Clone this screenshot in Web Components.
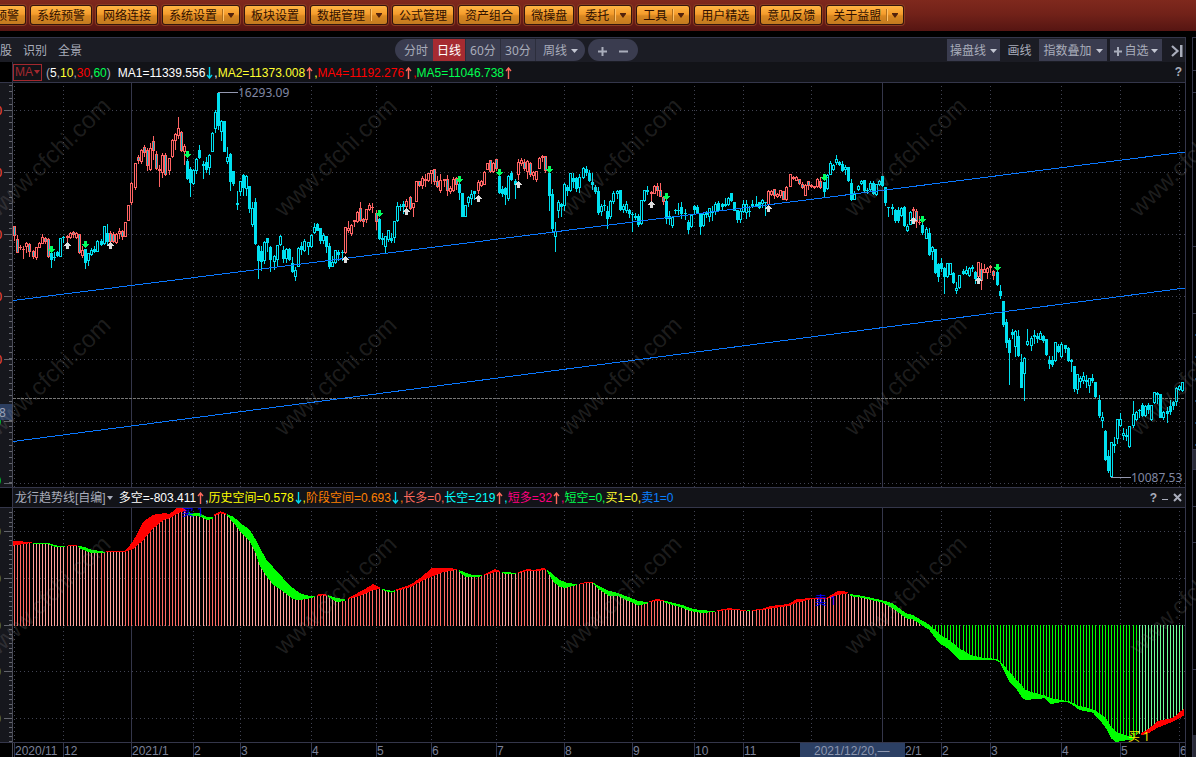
<!DOCTYPE html>
<html lang="zh-CN">
<head>
<meta charset="utf-8">
<title>行情图</title>
<style>
  html, body { margin: 0; background: #000; }
  body { font: 12px/16px "Liberation Sans", "Noto Sans CJK SC", sans-serif; color: #a9adbb; min-height: 100vh; overflow: hidden; }
</style>
</head>
<body>
<trading-page></trading-page>

<script>
const define = (name, html, setup) => {
  const tpl = document.createElement('template');
  tpl.innerHTML = html;
  customElements.define(name, class extends HTMLElement {
    connectedCallback() {
      if (this.shadowRoot) return;
      this.attachShadow({ mode: 'open' }).append(tpl.content.cloneNode(true));
      if (setup) setup(this, this.shadowRoot);
    }
  });
};

/* Orange menu button; the "menu" attribute adds a divider and an arrow */
define('menu-button', `
<style>
  :host { display: block; flex: none; }
  button { display: flex; align-items: center; height: 20px; padding: 0 6px; margin: 0; border: 1px solid #32150c; border-radius: 3px;
    background: linear-gradient(#ffb544 0, #f59c2c 45%, #d98720 55%, #c27a20 100%); box-shadow: 0 0 0 1px #8a3a22;
    font: 12px/18px "Noto Sans CJK SC", sans-serif; color: #301000; white-space: nowrap; }
  i { display: none; }
  :host([menu]) i { display: block; width: 0; height: 12px; margin-left: 5px; border-left: 1px solid #b06e1c; border-right: 1px solid #ffc166; }
  :host([menu]) svg { display: block; margin-left: 4px; }
  :host([menu]) button { padding-right: 5px; }
  svg { display: none; }
</style>
<button type="button"><slot></slot><i></i><svg width="6" height="5" viewBox="0 0 6 5"><path d="M0 0h6v1L3 5 0 1z" fill="#52220c"/></svg></button>`);

define('menu-bar', `
<style>
  :host { display: block; height: 31px; background: linear-gradient(#7f291d, #722219 45%, #561512); overflow: hidden; }
  nav { display: flex; gap: 4px; padding-top: 5px; }
  menu-button:first-child { margin-left: -12px; }
</style>
<nav aria-label="主菜单">
  <menu-button>预警</menu-button><menu-button>系统预警</menu-button><menu-button>网络连接</menu-button>
  <menu-button menu>系统设置</menu-button><menu-button>板块设置</menu-button><menu-button menu>数据管理</menu-button>
  <menu-button>公式管理</menu-button><menu-button>资产组合</menu-button><menu-button>微操盘</menu-button>
  <menu-button menu>委托</menu-button><menu-button menu>工具</menu-button><menu-button>用户精选</menu-button>
  <menu-button>意见反馈</menu-button><menu-button menu>关于益盟</menu-button>
</nav>`);

define('chart-toolbar', `
<style>
  :host { display: flex; height: 24px; background: #1b1c24; overflow: hidden; }
  button { height: 22px; margin: 0; padding: 2px 0 0; border: 0; background: none; color: #a9adbb; white-space: nowrap;
    font: 12px/20px "Noto Sans", "Noto Sans CJK SC", sans-serif; display: flex; align-items: center; justify-content: center; gap: 4px; }
  .left { flex: 0 0 33.333%; display: flex; gap: 11px; padding-top: 1px; box-sizing: border-box; }
  .pill { display: flex; height: 22px; margin-top: 1px; background: #3a3c4f; border-radius: 11px; overflow: hidden; }
  .pill button + button { border-left: 1px solid #2c2e3c; }
  .periods button { width: 35px; }
  .periods button:first-child { width: 38px; padding-left: 4px; }
  .periods button:nth-child(2) { width: 32px; border: 0; background: #a62b31; color: #fff; }
  .periods button:last-child { width: 50px; }
  .zoom { margin-left: 3px; padding: 0 4px; }
  .zoom button { width: 21px; }
  .zoom button + button { border: 0; }
  .right { margin-left: auto; display: flex; gap: 3px; padding: 1px 1px 0 0; }
  .right .b { background: #3a3c4f; }
  .w1 { width: 53px; } .w2 { width: 33px; } .w3 { width: 68px; } .w4 { width: 52px; gap: 2px; } .w5 { width: 15px; margin-left: 4px; }
  svg { flex: none; }
</style>
<div class="left"><button>股</button><button>识别</button><button>全景</button></div>
<div class="pill periods"><button>分时</button><button>日线</button><button>60分</button><button>30分</button>
  <button>周线<svg width="7" height="4"><path d="M0 0h7L3.500 4z" fill="#c3c6d2"/></svg></button></div>
<div class="pill zoom"><button aria-label="放大"><svg width="9" height="9"><path d="M0 3.500h9v2H0zM3.500 0h2v9h-2z" fill="#a9adbb"/></svg></button>
  <button aria-label="缩小"><svg width="9" height="9"><path d="M0 3.500h9v2H0z" fill="#a9adbb"/></svg></button></div>
<div class="right">
  <button class="b w1">操盘线<svg width="7" height="4"><path d="M0 0h7L3.500 4z" fill="#c3c6d2"/></svg></button>
  <button class="w2">画线</button>
  <button class="b w3">指数叠加<svg width="7" height="4"><path d="M0 0h7L3.500 4z" fill="#c3c6d2"/></svg></button>
  <button class="b w4"><svg width="8" height="9"><path d="M0 3.500h8v2H0zM3 0h2v9H3z" fill="#a9adbb"/></svg>自选<svg width="7" height="4"><path d="M0 0h7L3.500 4z" fill="#c3c6d2"/></svg></button>
  <button class="w5" aria-label="收起"><svg width="12" height="12"><path d="M1 1l5.500 5L1 11" fill="none" stroke="#a9adbb" stroke-width="2.200"/><path d="M9 0h2.500v12H9z" fill="#a9adbb"/></svg></button>
</div>`);

/* A small up or down arrow set in a line of figures */
define('trend-arrow', `
<style>
  :host { display: inline-block; width: 7px; height: 12px; margin: 0 1px; vertical-align: -2px; }
  svg { display: block; fill: none; stroke: #ff6a5c; stroke-width: 1.400; }
  .down { display: none; }
  :host([down]) .down { display: block; stroke: #00d8f0; }
  :host([down]) .up { display: none; }
</style>
<svg class="up" width="7" height="12"><path d="M3.500 12V1M1 4l2.500-3L6 4"/></svg>
<svg class="down" width="7" height="12"><path d="M3.500 0v11M1 8l2.500 3L6 8"/></svg>`);

/* Strip above a chart: title, figures, and tools at the right */
define('chart-legend', `
<style>
  :host { display: flex; align-items: center; height: 20px; margin-left: 12px; padding: 0 2px 0 0; background: #121318;
    border-left: 1px solid #34364a; white-space: nowrap; color: #a9adbb; }
  .tools { margin-left: auto; display: flex; gap: 5px; align-items: center; padding-right: 1px; }
</style>
<slot></slot><div class="tools"><slot name="tools"></slot></div>`);

/* Groups of [x offset, y offset, "x high bodyTop bodyBottom low kind"], in thirds of a unit */
const CANDLES = [
[0,80,`44 440 440 467 480 m,52 467 479 517 517 m,61 495 501 501 509 r,70 499 508 508 534 r,79 488 491 499 518 r,88 490 492 513 530 m,99 510 514 529 535 m,109 503 503 533 539 r,118 488 490 502 502 r,127 462 472 489 489 r,136 472 476 485 489 m,145 476 478 529 531 m,154 500 519 538 563 c,163 516 531 531 541 c,171 514 517 525 530 c,181 474 474 529 529 o,191 468 472 472 488 c,202 465 470 473 483 m,211 457 461 471 475 r,220 455 458 463 473 m,229 457 460 471 474 r,238 462 462 517 519 m,247 500 512 526 533 r,256 507 507 547 566 c,265 519 519 541 555 o,274 506 510 522 526 o,283 499 508 513 517 c,292 482 484 514 514 o,303 477 484 493 495 c,313 438 438 491 494 o,322 432 461 485 492 c,331 455 459 483 487 m,341 456 462 485 487 m,349 459 462 487 489 r,358 444 453 460 474 r,367 450 455 468 477 m,376 426 427 469 470 r,385 376 376 421 421 r,394 306 310 368 372 r,406 250 250 323 329 r,416 226 232 240 249 m,425 208 211 244 249 r,433 195 202 217 229 m,442 204 211 257 272 m,452 190 204 269 272 r,460 169 185 210 237 m,469 213 223 266 269 m,478 256 269 271 318 r,487 220 226 278 292 r,496 219 226 284 286 m,508 234 235 272 284 r,518 178 180 230 232 r,526 159 163 180 207 r,535 111 146 167 176 r,544 155 157 211 214 m,553 194 199 215 254 r,562 237 243 294 297 c,571 262 268 308 348 c,580 268 270 309 314 o,589 235 238 271 279 o,598 197 210 232 235 c,610 245 252 256 294 c,619 231 247 267 277 c,628 222 225 263 284 o,637 158 160 214 214 o,646 91 97 145 158 o,655 38 40 135 147 c,664 122 124 155 182 o,673 123 124 214 215 c,682 202 231 245 249 o,691 219 222 304 330 c,700 275 275 310 315 c,712 333 370 374 387 c,721 303 305 335 347 o,730 283 287 322 347 c,739 287 290 325 347 o,748 318 320 386 396 c,757 366 386 433 440 o,766 354 366 491 492 c,775 495 499 540 594 c,784 498 515 543 572 c,793 484 487 541 550 o,802 474 474 486 515 c,811 498 501 538 575 c,823 527 530 544 567 o,832 496 497 538 558 o,841 465 470 492 495 o,850 498 511 536 546 c,859 505 507 536 547 o,868 506 507 539 540 c,877 532 549 575 577 c,886 561 571 589 602 o,895 501 505 558 560 o`],
[300,80,`4 486 499 508 522 c,13 477 484 512 514 o,25 486 487 500 522 o,34 463 466 500 501 o,43 431 441 457 461 o,52 430 432 450 452 c,61 444 446 481 490 c,70 459 467 482 490 o,79 468 470 500 516 c,88 490 499 560 564 c,97 528 548 559 560 o,106 510 511 547 550 o,115 512 516 523 541 c,127 511 517 517 542 c,136 441 442 518 521 r,145 425 446 452 456 r,154 432 437 461 465 r,163 420 422 423 440 r,172 393 397 424 426 r,181 366 386 422 423 m,190 414 417 424 440 m,199 387 388 419 426 r,208 371 376 388 391 r,217 369 381 383 398 r,229 391 400 425 447 m,238 414 417 475 477 c,247 460 475 478 494 c,256 468 470 500 519 o,265 450 451 479 485 o,274 460 476 480 486 c,283 423 425 472 486 o,292 367 380 421 423 o,301 373 378 380 390 c,310 365 374 379 400 c,319 358 365 379 382 r,331 349 353 386 388 m,340 371 371 381 408 r,349 303 304 363 365 r,358 303 305 316 320 m,367 289 295 316 326 r,376 284 297 300 318 m,385 279 280 300 304 r,394 270 271 280 309 r,403 267 268 303 313 m,412 290 303 320 323 m,421 283 301 332 338 r,433 298 299 301 318 r,442 285 299 330 346 m,451 320 325 335 341 r,460 291 298 331 333 r,469 292 294 314 328 m,478 311 313 338 357 c,487 341 341 409 410 c,496 375 377 409 410 o,505 348 353 367 378 o,514 331 344 355 374 o,523 333 335 340 357 c,535 300 306 332 341 r,544 301 303 315 320 r,553 274 276 313 314 r,562 249 250 268 268 r,571 240 241 275 278 m,580 247 250 275 278 r,589 237 238 265 272 m,598 287 290 337 341 c,607 318 328 341 350 c,616 322 324 344 372 c,625 286 289 354 360 o,634 273 279 298 301 c,646 299 305 313 354 c,655 237 248 283 298 r,664 234 240 250 256 r,673 237 248 264 270 m,682 241 243 275 294 r,691 248 250 283 288 m,700 274 276 287 298 r,709 273 275 298 304 r,718 231 235 265 266 r,727 225 229 231 243 r,736 228 229 270 278 m,748 276 280 346 392 c,757 328 343 445 454 c,766 427 455 470 513 o,775 362 368 391 411 o,784 371 374 379 408 c,793 311 313 376 390 o,802 316 323 331 345 c,811 279 280 331 333 o,820 280 294 304 322 c,829 292 295 324 333 c,838 282 292 323 336 o,850 262 265 292 296 o,859 260 267 276 287 c,868 272 281 300 303 c,877 279 308 312 327 c,886 315 321 333 341 c,895 322 333 398 404 c`],
[600,80,`4 372 378 393 407 o,13 360 375 377 392 c,22 380 393 415 444 c,31 360 363 410 416 o,40 333 340 365 369 o,52 332 335 341 356 o,61 330 331 389 391 c,70 372 380 387 398 o,79 363 372 390 397 o,88 388 390 400 413 c,97 398 402 402 453 c,106 399 408 412 419 c,115 403 408 432 440 c,124 360 362 430 432 o,133 331 332 361 363 o,142 318 330 334 343 c,154 334 336 341 360 r,163 315 319 340 341 r,172 309 319 332 345 m,181 310 331 348 350 m,190 349 352 364 374 m,199 362 364 415 430 c,208 395 408 415 433 o,217 409 413 436 441 o,226 387 391 392 399 c,235 369 391 392 403 c,244 366 381 400 414 c,256 387 400 400 417 c,265 420 427 449 459 c,274 403 406 438 441 o,283 375 378 387 400 c,292 376 382 396 398 c,301 400 402 440 462 c,310 401 404 436 440 o,319 394 398 403 413 c,328 385 386 410 424 o,337 380 396 398 422 c,346 368 372 395 402 o,355 363 371 391 395 c,367 370 374 378 391 c,376 356 373 376 378 c,385 351 354 374 375 o,394 339 341 362 364 c,403 366 367 391 392 c,412 390 391 418 426 c,421 389 393 419 426 o,430 360 373 395 398 o,439 362 373 398 416 o,448 380 393 394 408 c,457 360 374 377 383 o,469 348 372 378 380 c,478 367 367 381 386 c,487 358 362 369 383 o,496 367 367 367 405 c,505 332 335 374 377 r,514 331 333 344 346 r,523 327 328 347 354 m,532 339 343 350 352 r,541 331 332 345 352 r,550 333 335 357 359 m,559 320 323 357 360 r,571 282 284 318 320 r,580 288 291 296 299 m,589 289 293 300 301 r,598 297 299 310 312 m,607 307 312 321 324 m,616 314 317 346 347 r,625 303 305 317 328 m,634 312 316 318 322 r,643 318 320 322 324 r,652 296 299 318 321 r,661 291 304 322 324 m,673 306 306 334 352 c,682 283 285 325 327 o,691 243 250 283 284 o,700 252 256 267 270 o,709 225 238 247 253 o,718 243 247 253 256 c,727 243 254 270 273 c,736 255 262 269 283 o,745 262 262 301 303 c,754 297 310 357 361 c,763 333 342 357 359 o,775 316 318 328 330 o,784 301 303 311 314 o,793 300 302 332 333 c,802 326 330 331 341 c,811 304 310 329 333 o,820 305 311 340 342 c,829 312 314 342 345 o,838 302 304 312 317 o,847 288 290 316 320 c,856 321 322 366 375 c,865 381 382 383 408 c,877 373 382 384 404 c,886 387 390 420 426 c,895 383 390 420 426 c`],
[880,140,`64 203 206 226 230 o,73 200 203 256 260 c,82 254 258 272 275 o,91 215 217 253 254 o,100 201 209 212 231 r,109 208 213 244 261 m,118 228 246 248 254 r,127 251 255 277 284 c,139 261 269 294 296 o,148 266 279 343 346 c,157 318 322 335 359 o,166 327 328 397 399 c,175 370 373 410 425 c,184 354 370 386 393 c,193 382 384 408 459 c,202 369 371 410 413 o,211 370 371 402 403 o,220 396 401 427 430 c,229 428 445 450 459 o,238 405 406 443 445 o,250 388 395 399 404 c,259 380 390 401 404 o,268 382 386 407 410 o,277 377 382 384 393 c,286 395 397 415 429 c,295 367 368 410 413 r,304 369 387 421 449 m,313 373 388 396 398 r,322 383 385 397 416 r,331 375 380 382 396 r,340 392 394 406 418 m,352 394 397 433 435 c,361 435 454 467 474 c,370 483 484 552 558 c,379 538 547 608 622 c,388 596 602 636 732 c,397 567 576 584 595 c,406 571 573 619 648 o,415 572 588 646 648 c,424 642 666 742 743 c,433 652 656 700 780 o,442 567 604 613 615 o,454 590 594 616 630 o,463 570 586 588 611 c,472 581 590 595 606 c,481 575 580 597 598 o,490 587 590 600 606 c,499 597 599 643 645 c,508 648 661 670 686 c,517 648 660 672 680 c,526 606 607 660 663 o,535 614 620 634 636 c,544 606 612 650 653 o,556 615 617 626 636 c,565 621 624 662 664 c,574 657 660 663 693 c,583 679 680 746 753 c,592 702 703 748 759 o,601 708 715 724 741 o,610 698 710 722 729 o,619 707 720 724 742 c,628 714 715 736 756 o,637 702 714 722 728 c,646 726 728 770 773 c,658 766 781 827 831 c,667 816 833 841 861 o,676 870 873 958 960 c,685 930 950 992 996 c,694 906 908 1010 1013 o,703 893 912 917 936 c,712 837 839 895 911 o,721 819 837 856 859 o,730 864 881 886 897 o,739 869 885 890 901 c,748 858 860 919 923 o,760 783 823 857 861 o,769 815 816 838 840 o,778 808 810 812 831 c,787 789 795 827 830 c,796 795 798 827 830 o,805 790 795 809 820 c,814 796 797 838 840 o,824 756 758 786 790 o,832 756 759 762 790 c,841 762 763 831 833 c,850 815 817 831 838 o,862 803 814 820 846 c,871 782 800 815 822 c,880 783 786 796 807 c,889 743 745 785 796 o,898 735 740 748 750 o,907 727 728 751 753 o`]
].flatMap(([ox, oy, s]) => s.split(',').map(t => {
  const p = t.split(' ');
  const y = v => oy + Math.floor(v / 3);
  return { x: ox + Math.floor(p[0] / 3), hi: y(p[1]), top: y(p[2]), bot: y(p[3]), lo: y(p[4]), kind: p[5] };
}));

/* Ribbon of the trend indicator: x, upper edge, lower edge, in thirds of a unit; one run per colour */
const RIBBON = `r 40 182 197,60 184 194,95 186 189|g 100 189 191,140 189 191,150 190 195,165 196 200,195 199 201|r 203 196 199,230 196 199|g 233 197 201,250 200 210,275 209 220,300 213 220,313 215 217|r 318 214 217,372 214 217,380 208 214,400 182 207,430 125 180,460 104 145,490 100 120,510 101 115,530 84 102,550 82 94,556 90 98|g 565 97 106,600 100 110,620 110 120,637 110 117|r 643 103 108,660 94 100,678 99 104|g 682 103 108,700 110 128,725 132 160,750 150 185,765 175 215,780 205 260,800 240 290,820 262 315,850 295 335,880 325 358,900 340 360,930 348 355,943 348 351|r 950 344 348,970 342 346,980 344 348|g 985 346 352,1010 354 365,1035 358 364|r 1045 354 357,1080 335 348,1120 312 330,1140 322 327|g 1145 326 330,1175 333 338,1185 331 335|r 1187 328 332,1200 325 330,1235 312 320,1265 290 303,1295 265 290,1330 264 276,1370 266 270|g 1378 270 276,1395 278 290,1415 284 292,1445 286 289|r 1452 283 286,1485 267 277,1500 272 276|g 1506 275 280,1547 279 283|r 1553 277 280,1580 268 273,1605 269 273,1629 264 271,1637 266 270|g 1641 268 273,1660 285 305,1680 300 322,1700 308 323,1730 313 315|r 1741 310 313,1760 306 309,1778 307 310|g 1780 308 312,1800 320 330,1825 332 347,1850 338 347,1890 353 365,1915 363 377,1942 366 370|r 1946 364 367,1970 357 362,1991 360 363|g 1993 362 367,2050 376 385,2070 384 393,2100 390 398,2145 393 397|r 2150 391 394,2190 384 389,2205 388 391,2237 389 392|g 2240 389 392,2250 389 392|r 2255 389 392,2280 388 391,2310 378 386,2365 372 378,2390 357 368,2438 354 357,2478 354 357,2513 333 345,2543 335 340|g 2551 342 348,2588 348 354,2648 361 368,2678 370 385,2718 400 415,2738 405 418,2788 434 450,2818 462 490,2848 480 508,2878 505 540,2908 523 540,2938 532 539,2983 536 539,2998 541 546,3028 575 605,3048 598 625,3068 620 655,3078 630 660,3108 640 657,3133 646 655,3153 655 672,3188 661 665,3208 663 668,3238 678 690,3278 687 698,3298 700 718,3318 715 745,3333 740 775,3348 755 786,3373 765 782,3400 770 778|r 3423 760 767,3448 745 758,3473 723 743,3518 714 725,3550 687 708`
.split('|').map(run => ({
  color: run[0] === 'r' ? '#ff0000' : '#00ff00',
  pts: run.slice(2).split(',').map(t => t.split(' ').map(Number)).map(([x, a, b]) => [x / 3, 480 + a / 3, 480 + b / 3])
}));
const ALL = RIBBON.flatMap(r => r.pts);
const edge = (pts, x) => {
  if (x <= pts[0][0]) return [pts[0][1], pts[0][2]];
  for (let i = 1; i < pts.length; i++) if (x <= pts[i][0]) {
    const [p, q] = [pts[i - 1], pts[i]], k = (x - p[0]) / (q[0] - p[0]);
    return [p[1] + k * (q[1] - p[1]), p[2] + k * (q[2] - p[2])];
  }
  const l = pts[pts.length - 1];
  return [l[1], l[2]];
};

const MONTHS = [[14,'2020/11'],[63,'12'],[131,'2021/1',1],[193,'2'],[240,'3'],[311,'4'],[376,'5'],[431,'6'],[496,'7'],[564,'8'],[632,'9'],[694,'10'],[743,'11'],[811,''],[882,'',1],[941,'2'],[990,'3'],[1061,'4'],[1120,'5'],[1179,'6']];
const rect = (x, y, w, h, f) => `<rect x="${x}" y="${y}" width="${w}" height="${h}" fill="${f}"/>`;
const grid = (y0, y1, rows, step) => {
  let s = rect(0, y0, 12, y1 - y0, '#16171d') + rect(12, y0, 1, y1 - y0, '#4a4c58');
  for (const y of rows) s += `<path d="M16 ${y}.5H1185" stroke="#414352" stroke-dasharray="1 3"/>` + rect(4, y, 8, 1, '#62646c');
  for (let y = rows[0] - step * 10; y < y1; y += step) if (y > y0) s += rect(9, Math.round(y), 3, 1, '#62646c');
  for (const [x, , solid] of MONTHS) s += solid
    ? `<path d="M${x}.5 ${y0}V${y1}" stroke="#34364a"/>`
    : `<path d="M${x}.5 ${y0 + 3}V${y1}" stroke="#414352" stroke-dasharray="1 3"/>`;
  return s;
};
const CHART_CSS = `<style>
  :host { display: block; border-top: 1px solid #34364a; border-bottom: 1px solid #34364a; background: #000; }
  svg { display: block; width: 100%; height: auto; shape-rendering: crispEdges; }
  text { font: 12px "Noto Sans", "Noto Sans CJK SC", sans-serif; }
</style>`;
/* Signal arrow built of pixel rows, centred on (x, y) */
const marker = (x, y, rows, color) => rows.map((w, i) => rect(x - (w - 1) / 2, y - 3 + i, w, 1, color)).join('');

define('kline-chart', CHART_CSS + `<svg viewBox="0 83 1185 404" role="img" aria-label="日线K线图"></svg>`, (el, root) => {
  let s = grid(83, 487, [110, 172, 234, 296, 359, 421, 483], 6.2);
  s += `<path d="M13 398.500H1185" stroke="#777" stroke-dasharray="3 1"/>`;
  for (const c of CANDLES) {
    const red = c.kind === 'r' || c.kind === 'm', line = red ? '#ff6464' : '#00e0f0';
    const h = Math.max(1, c.bot - c.top + 1);
    s += rect(c.x, c.hi, 1, Math.max(1, c.lo - c.hi + 1), line) + rect(c.x - 1, c.top, 3, h, line);
    if (h > 2 && c.kind !== 'c') s += rect(c.x, c.top + 1, 1, h - 2, c.kind === 'm' ? '#00b8cc' : '#000');
  }
  s += `<path d="M13 300.500L1185 152M13 441.500L1185 288" stroke="#0a78ff" fill="none"/>`;
  for (const [x, y] of [[51,249],[85,244],[187,154],[379,213],[459,179],[499,172],[549,169],[666,196],[824,177],[922,219],[997,267]])
    s += marker(x, y, [3, 3, 3, 7, 5, 3, 1], '#00ff60');
  for (const [x, y] of [[67,245],[110,245],[345,259],[406,211],[478,198],[518,184],[651,204],[768,208],[913,220],[978,280]])
    s += marker(x, y, [1, 3, 5, 7, 3, 3, 3], '#dcdcdc');
  s += rect(218, 92, 20, 1, '#9498b0') + rect(1111, 477, 20, 1, '#9498b0');
  s += `<text x="238" y="97" fill="#8088a4">16293.09</text><text x="1131" y="482" fill="#8088a4">10087.53</text>`;
  for (const y of [110, 172, 234, 296, 359]) s += `<text x="2" y="${y + 5}" text-anchor="end" fill="#ff4a3c">0</text>`;
  for (const y of [421, 480]) s += `<text x="1" y="${y + 5}" text-anchor="end" fill="#00ff60">0</text>`;
  s += rect(0, 404, 12, 16, '#2c3e60') + `<text x="-1" y="417" fill="#9aa2b8">8</text>`;
  root.querySelector('svg').innerHTML = s;
});

define('trend-chart', CHART_CSS + `<svg viewBox="0 508 1185 234" role="img" aria-label="龙行趋势线"></svg>`, (el, root) => {
  let s = grid(508, 742, [531, 578, 625, 671, 718], 4.67), prev = null;
  for (const c of CANDLES) {
    const [a, b] = edge(ALL, c.x + 0.5);
    const rising = prev !== null ? b < prev - 0.05 : true;
    prev = b;
    if (b < 625) s += rect(c.x, Math.round(b), 1, 626 - Math.round(b), rising ? '#ff6a64' : '#ffa09a');
    else if (a > 626) s += rect(c.x, 625, 1, Math.round(a) - 625, c.x > 1136 ? '#6eff96' : '#00ff00');
  }
  for (const run of RIBBON) {
    const end = run.pts[run.pts.length - 1][0];
    for (let x = Math.round(run.pts[0][0]); x < end; x++) {
      const [a, b] = edge(run.pts, x + 0.5), t = Math.round(a);
      s += rect(x, t, 1, Math.max(1, Math.round(b) - t), run.color);
    }
  }
  s += `<text x="182" y="516" fill="#0000ff">卖 1</text><text x="815" y="605" fill="#0000ff">卖 1</text><text x="1128" y="741" fill="#f5e600">买 1</text>`;
  for (const y of [531, 578, 625, 671, 718]) s += `<text x="1" y="${y + 5}" text-anchor="end" fill="#5c9080">0</text>`;
  root.querySelector('svg').innerHTML = s;
});

define('time-axis', `<style>
  :host { display: block; background: #000; }
  svg { display: block; width: 100%; height: auto; }
  text { font: 12px "Liberation Sans", sans-serif; fill: #7c8299; }
</style><svg viewBox="0 743 1185 14" role="img" aria-label="时间轴"></svg>`, (el, root) => {
  let s = rect(12, 743, 1, 14, '#4a4c58');
  for (const [x, t] of MONTHS) s += rect(x, 743, 1, 14, '#34364a') + `<text x="${x + 1}" y="755">${t}</text>`;
  s += rect(800, 743, 105, 14, '#2c4064') + `<text x="814" y="755" style="fill:#8d97b0">2021/12/20,—</text><text x="905" y="755">2/1</text>`;
  root.querySelector('svg').innerHTML = s;
});

/* Edge of the neighbouring quote panel */
define('side-panel', `<style>
  :host { display: flex; flex-direction: column; flex: 0 0 4px; box-sizing: border-box; border-left: 1px solid #34364a; border-top: 1px solid #34364a; overflow: hidden; }
  div { border-bottom: 1px solid #34364a; flex: none; box-sizing: border-box; }
  .a { height: 33px; } .b { height: 22px; } .c { height: 154px; } .d { height: 67px; }
  .e { height: 136px; background: repeating-linear-gradient(#000 0 20px, #14406c 20px 22px) right / 1px 100% no-repeat; }
  .f { height: 20px; background: #2a2b38; } .g { height: 37px; } .h { height: 36px; } .i { height: 127px; } .j { flex: 1; border: 0; background: linear-gradient(#000 65px, #2a2b38 65px); }
</style><div class="a"></div><div class="b"></div><div class="c"></div><div class="d"></div><div class="e"></div><div class="f"></div><div class="g"></div><div class="h"></div><div class="i"></div><div class="j"></div>`);

define('water-mark', `<style>
  :host { position: absolute; inset: 0; overflow: hidden; pointer-events: none; }
  svg { display: block; width: 100%; height: 100%; }
  text { font: 24px "Liberation Sans", sans-serif; fill: rgba(150, 150, 150, .2); }
</style><svg aria-hidden="true"></svg>`, (el, root) => {
  let s = '';
  for (const y of [218, 437, 656]) for (const x of [-2, 284, 569, 854, 1139])
    s += `<text transform="translate(${x} ${y}) rotate(-44)">www.cfchi.com</text>`;
  root.querySelector('svg').innerHTML = s;
});

define('trading-page', `
<style>
  :host { display: block; position: relative; overflow: hidden; min-height: 100vh; }
  .body { display: flex; gap: 6px; margin-top: 6px; }
  main { flex: 1; min-width: 0; border-top: 1px solid #34364a; border-right: 1px solid #34364a; overflow: hidden; }
  chart-legend.first > span { padding-top: 2px; }
  chart-legend.second { height: 19px; }
  button { margin: 0; padding: 0; border: 0; background: none; font: inherit; color: inherit; display: flex; align-items: center; gap: 1px; }
  .ma { border: 1px solid #a3282e; color: #a3282e; height: 17px; padding: 0 1px; margin-right: 4px; box-sizing: border-box; }
  .args { margin-right: 7px; }
  .title { margin: 0 6px 0 2px; }
  .w { color: #fff; } .y { color: #ffff30; } .r { color: #ff0000; } .g { color: #00ff50; } .o { color: #ff8000; }
  .s { color: #ff6a5c; } .c { color: #00ffff; } .p { color: #ff0080; } .b { color: #0a80ff; } .yy { color: #ffff00; }
</style>
<menu-bar></menu-bar>
<div class="body">
  <main>
    <chart-toolbar></chart-toolbar>
    <chart-legend class="first">
      <button class="ma">MA<svg width="6" height="4"><path d="M0 0h6L3 4z" fill="#a3282e"/></svg></button>
      <span class="args">(<span class="w">5</span>,<span class="y">10</span>,<span class="r">30</span>,<span class="g">60</span>)</span>
      <span><span class="w">MA1=11339.556</span><trend-arrow down></trend-arrow><span class="w">,</span><span class="y">MA2=11373.008</span><trend-arrow></trend-arrow><span class="y">,</span><span class="r">MA4=11192.276</span><trend-arrow></trend-arrow><span class="r">,</span><span class="g">MA5=11046.738</span><trend-arrow></trend-arrow></span>
      <button slot="tools" aria-label="帮助"><b>?</b></button>
    </chart-legend>
    <kline-chart></kline-chart>
    <chart-legend class="second">
      <button class="title">龙行趋势线[自编]<svg width="6" height="4"><path d="M0 0h6L3 4z" fill="#a9adbb"/></svg></button>
      <span><span class="w">多空=-803.411</span><trend-arrow></trend-arrow><span class="w">,</span><span class="yy">历史空间=0.578</span><trend-arrow down></trend-arrow><span class="yy">,</span><span class="o">阶段空间=0.693</span><trend-arrow down></trend-arrow><span class="o">,</span><span class="s">长多=0,</span><span class="c">长空=219</span><trend-arrow></trend-arrow><span class="c">,</span><span class="p">短多=32</span><trend-arrow></trend-arrow><span class="p">,</span><span class="g">短空=0,</span><span class="y">买1=0,</span><span class="b">卖1=0</span></span>
      <button slot="tools" aria-label="帮助"><b>?</b></button>
      <button slot="tools" aria-label="最小化"><svg width="6" height="10"><path d="M0 6h6v1H0z" fill="#a9adbb"/></svg></button>
      <button slot="tools" aria-label="关闭"><svg width="9" height="9"><path d="M1 1l7 7M8 1L1 8" stroke="#a9adbb" stroke-width="2"/></svg></button>
    </chart-legend>
    <trend-chart></trend-chart>
    <time-axis></time-axis>
  </main>
  <side-panel></side-panel>
</div>
<water-mark></water-mark>`);
</script>
</body>
</html>
